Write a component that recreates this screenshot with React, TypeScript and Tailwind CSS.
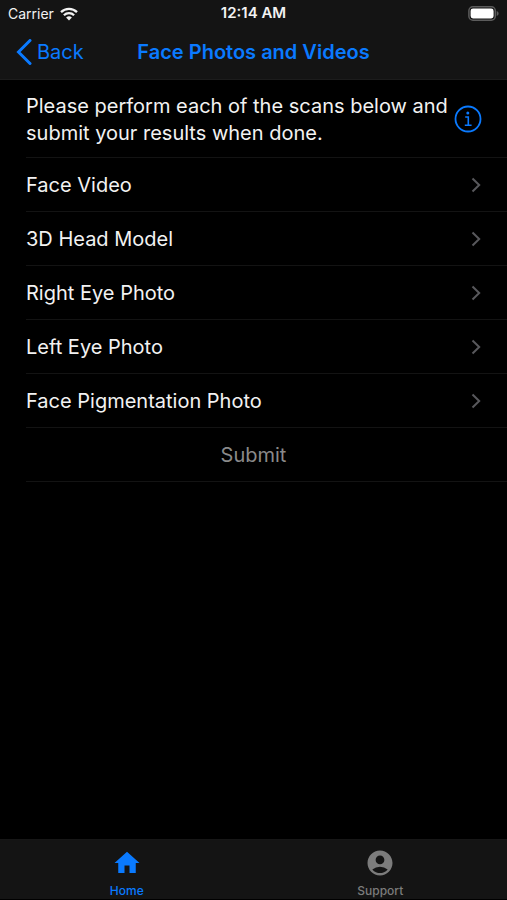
import { MdAccountCircle, MdHome } from 'react-icons/md';

const scans = [
  { id: 'face-video', name: 'Face Video' },
  { id: 'head-model', name: '3D Head Model' },
  { id: 'right-eye', name: 'Right Eye Photo' },
  { id: 'left-eye', name: 'Left Eye Photo' },
  { id: 'pigmentation', name: 'Face Pigmentation Photo' },
];

const tabs = [
  { id: 'home', name: 'Home', icon: MdHome, active: true },
  { id: 'support', name: 'Support', icon: MdAccountCircle, active: false },
];

function WifiIcon() {
  return (
    <svg viewBox="0 0 18 14" className="w-[18px] h-[14px]" fill="none" stroke="currentColor" strokeWidth="2.3">
      <path d="M1 5.1a11.4 11.4 0 0 1 16 0" />
      <path d="M3.9 8.3a7.3 7.3 0 0 1 10.2 0" />
      <path d="M9 13.6 6.1 10.6a4.2 4.2 0 0 1 5.8 0z" fill="currentColor" stroke="none" />
    </svg>
  );
}

function BatteryIcon() {
  return (
    <svg viewBox="0 0 31 15" className="w-[31px] h-[15px]" fill="none">
      <rect x="0.9" y="0.8" width="26.400" height="13.4" rx="4" stroke="#5c5c5c" strokeWidth="1.5" />
      <rect x="2.6" y="2.5" width="23" height="10" rx="2.4" fill="#fff" />
      <path d="M28.700 5v5c1.200-.4 1.900-1.400 1.900-2.500s-.7-2.100-1.900-2.500z" fill="#5c5c5c" />
    </svg>
  );
}

function BackIcon() {
  return (
    <svg viewBox="0 0 16 26" className="w-4 h-[26px]" fill="none" stroke="currentColor" strokeWidth="3">
      <path d="M14 1.5 2.5 13 14 24.5" strokeLinecap="round" />
    </svg>
  );
}

function DisclosureIcon() {
  return (
    <svg viewBox="0 0 10 16" className="w-[10px] h-4 text-[#58585c]" fill="none" stroke="currentColor" strokeWidth="2">
      <path d="m1.5 1.5 6.7 6.5-6.7 6.5" />
    </svg>
  );
}

function InfoIcon() {
  return (
    <svg viewBox="0 0 28 28" className="w-7 h-7" fill="none" stroke="currentColor">
      <circle cx="14" cy="14" r="12.5" strokeWidth="1.8" />
      <circle cx="13.8" cy="7.9" r="1.5" fill="currentColor" stroke="none" />
      <path d="M11.2 12h3.1v8.2M10.8 20.2h6.8" strokeWidth="1.6" />
    </svg>
  );
}

export default function App() {
  return (
    <div className="min-h-screen flex flex-col bg-black text-[#f2f2f2] font-['Inter',sans-serif]">
      <header className="bg-[#141414] border-b border-[#1c1c1c]">
        <div className="grid grid-cols-3 items-center h-[27px] px-2">
          <div className="flex items-center gap-[6px]">
            <span className="text-sm">Carrier</span>
            <WifiIcon />
          </div>
          <span className="text-center text-[15px] font-semibold">12:14 AM</span>
          <div className="flex justify-end">
            <BatteryIcon />
          </div>
        </div>
        <div className="grid grid-cols-[1fr_auto_1fr] items-center h-[52px] pb-[2px] px-4 text-[#0a7aff]">
          <button type="button" className="flex items-center gap-[5px] text-xl">
            <BackIcon />
            Back
          </button>
          <h1 className="text-xl font-semibold">Face Photos and Videos</h1>
        </div>
      </header>

      <main className="flex-1 pl-[26px]">
        <div className="flex items-center justify-between h-[78px] pr-[25px] border-b border-[#131313]">
          <p className="pt-[2px] text-xl leading-[27px]">
            Please perform each of the scans below and submit your results when done.
          </p>
          <button type="button" aria-label="Scan instructions" className="flex-shrink-0 text-[#0a7aff]">
            <InfoIcon />
          </button>
        </div>
        <ul>
          {scans.map((scan) => (
            <li key={scan.id}>
              <a
                href={`#${scan.id}`}
                className="flex items-center justify-between h-[54px] pt-px pr-[26px] border-b border-[#131313] text-xl"
              >
                {scan.name}
                <DisclosureIcon />
              </a>
            </li>
          ))}
        </ul>
        <button
          type="button"
          disabled
          className="block w-full h-[54px] pr-[26px] border-b border-[#131313] text-xl text-[#8a8a8a]"
        >
          Submit
        </button>
      </main>

      <nav className="grid grid-cols-2 bg-[#141414] border-t border-t-[#171717] border-b border-b-black">
        {tabs.map((tab) => {
          const Icon = tab.icon;
          return (
            <a
              key={tab.id}
              href={`#${tab.id}`}
              className={`flex flex-col items-center pt-2 h-[59px] text-xs font-medium ${
                tab.active ? 'text-[#0a7aff]' : 'text-[#7c7c7c]'
              }`}
            >
              <Icon className="w-[30px] h-[30px]" />
              <span className="pt-[5px]">{tab.name}</span>
            </a>
          );
        })}
      </nav>
    </div>
  );
}
